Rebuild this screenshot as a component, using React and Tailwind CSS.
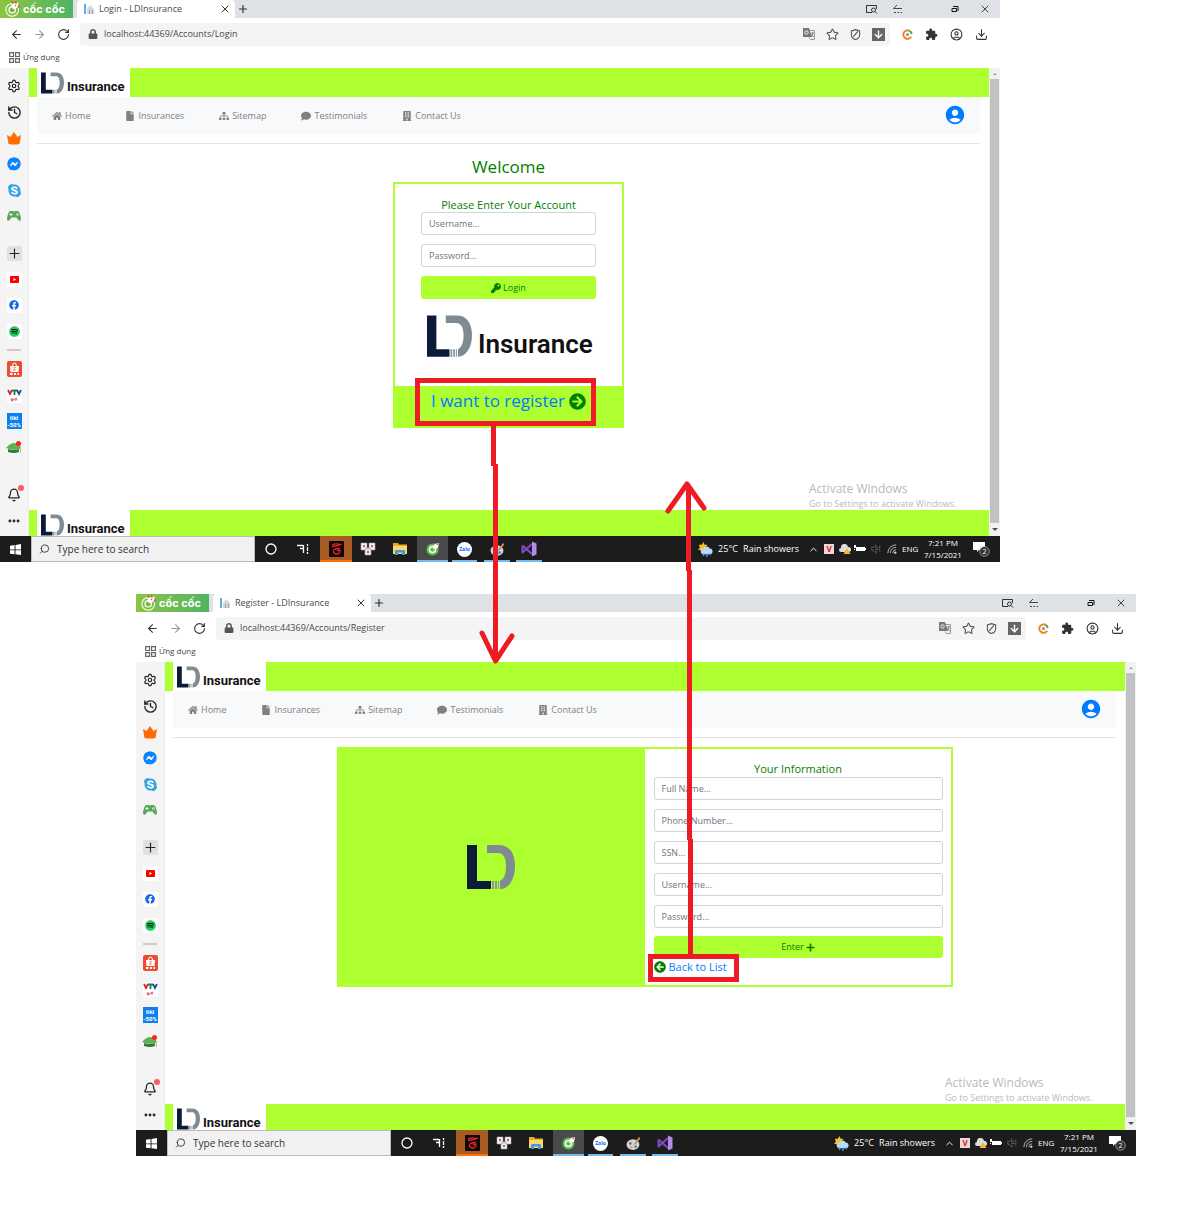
import React from "react";
import {
  FaHome, FaFile, FaSitemap, FaComment, FaBuilding, FaKey,
  FaArrowCircleRight, FaArrowCircleLeft, FaPlus, FaSpotify, FaFacebook,
  FaFacebookMessenger, FaSkype, FaLock,
} from "react-icons/fa";
import { MdAccountCircle, MdExtension } from "react-icons/md";
import {
  ArrowLeft, ArrowRight, RotateCw, Plus, X, Star, ArrowDown, CircleUser, Download,
  Settings, History, Bell, Search, ChevronUp, Ellipsis, Circle,
} from "lucide-react";

function LogoMark({ className }) {
  return (
    <svg viewBox="0 0 48 44" className={className} aria-hidden="true">
      <path d="M0 0h10v36h14v8H0z" fill="#0a1a38" />
      <path d="M20 0h12c10 0 16 8 16 21s-6 23-15 23V36c4-2 6-7 6-15 0-9-3-13-8-13H20z" fill="#7f8b92" />
      <path d="M25 36h2v8h-2zM28 36h2v8h-2zM31 36h1v8h-1z" fill="#8d989e" />
    </svg>
  );
}

function SmallLogo() {
  return (
    <div className="ml-2 flex h-[29px] w-[93px] items-start bg-white pl-1 pt-[4px]">
      <LogoMark className="h-[22px] w-[23px] shrink-0" />
      <span className="ml-[3px] mt-[6px] font-['Roboto',sans-serif] text-[13px] font-bold leading-[18px] text-[#111]">
        Insurance
      </span>
    </div>
  );
}

function CocCocMark({ className }) {
  return (
    <svg viewBox="0 0 20 20" className={className} aria-hidden="true">
      <circle cx="9" cy="11" r="8" fill="none" stroke="white" strokeWidth="1.300" />
      <circle cx="9" cy="11" r="4" fill="none" stroke="white" strokeWidth="1.500" />
      <path d="M9 11l-1-8 9-1-1 6z" fill="white" />
      <path d="M8 3l1.500-3L11 3zM12 3l1.500-3L15 3zM12 6l2-2v3zM15 8l3-3v3z" fill="#e53935" />
      <circle cx="9" cy="11" r="1.500" fill="#4caf50" />
    </svg>
  );
}

function TabStrip({ title }) {
  return (
    <div className="flex h-[18px] items-stretch bg-[#dee1e6]">
      <button className="flex w-[73px] items-center bg-linear-to-r from-[#8bc53f] to-[#4db463] pl-[5px] text-white">
        <CocCocMark className="size-4" />
        <span className="ml-[2px] font-['Inter',sans-serif] text-[11px] font-bold leading-[18px]">cốc cốc</span>
      </button>
      <div className="ml-1 flex w-[158px] items-center rounded-t bg-white pl-[6px] pr-1">
        <svg viewBox="0 0 12 12" className="size-3" aria-hidden="true">
          <path d="M1 1h2v10H1z" fill="#6aa9dd" />
          <path d="M4 6l3-4 4 4v5H4z" fill="#d3d9de" />
          <path d="M6 7h1v4H6zM9 7h1v4H9z" fill="#9aa4ac" />
        </svg>
        <span className="ml-1 flex-1 text-[9px] leading-4 text-[#45494e]">{title}</span>
        <button aria-label="Close tab"><X className="size-3" strokeWidth={2} color="#333" /></button>
      </div>
      <button aria-label="New tab" className="ml-[2px]"><Plus className="size-3" strokeWidth={2.4} color="#333" /></button>
      <div className="ml-auto flex items-center pr-[9px] text-[#333]">
        <button aria-label="Search tabs" className="mr-[15px]">
          <svg viewBox="0 0 12 10" className="h-[10px] w-3" fill="none" stroke="currentColor">
            <path d="M6 8.500H.5v-7h10V5" /><circle cx="7.500" cy="6" r="2" /><path d="M9 7.500l2 2" />
          </svg>
        </button>
        <button aria-label="Minimize" className="mr-12">
          <svg viewBox="0 0 10 10" className="size-[10px]" fill="none" stroke="currentColor" strokeWidth=".9">
            <path d="M.5 4.500H9M4 1L.5 4.500M1 8.500h2M4.500 8.500h1.500M7.500 8.500H9" />
          </svg>
        </button>
        <button aria-label="Restore" className="mr-[20px]">
          <svg viewBox="0 0 8 8" className="size-2" fill="none" stroke="#111">
            <path d="M2 1.500h5V6M1 3.500h4.500v3H1z" />
          </svg>
        </button>
        <button aria-label="Close window"><X className="size-3" strokeWidth={1.8} /></button>
      </div>
    </div>
  );
}

function Toolbar({ path }) {
  return (
    <div className="flex h-[32px] items-center bg-white text-[#333]">
      <button aria-label="Back" className="ml-[10px]"><ArrowLeft className="size-[13px]" /></button>
      <button aria-label="Forward" className="ml-[10px] text-[#999]"><ArrowRight className="size-[13px]" /></button>
      <button aria-label="Reload" className="ml-[11px]"><RotateCw className="size-[13px]" /></button>
      <div className="ml-[10px] flex h-[23px] flex-1 items-center rounded-sm bg-[#f4f4f4] pl-2 pr-[5px]">
        <FaLock className="size-[10px] text-[#555]" />
        <input
          aria-label="Address"
          defaultValue={"localhost:44369" + path}
          className="ml-[6px] min-w-0 flex-1 bg-transparent text-[9px] leading-4 text-[#4a4a4a] outline-none"
        />
        <div className="flex items-center gap-[11px] text-[#555]">
          <button aria-label="Translate">
            <svg viewBox="0 0 12 12" className="size-3">
              <path d="M0 0h6l3 9H0z" fill="#777" />
              <path d="M7 2.500h4.500v9H7.500L6 9.500" fill="none" stroke="#999" />
              <circle cx="3.500" cy="4.500" r="1.700" fill="none" stroke="#fff" strokeWidth=".9" />
              <path d="M8 5h3M9.500 4v1M8 9l2.500-4M8.500 6l2 3" stroke="#777" strokeWidth=".8" />
            </svg>
          </button>
          <button aria-label="Bookmark"><Star className="size-[13px]" strokeWidth={2} /></button>
          <button aria-label="Shield">
            <svg viewBox="0 0 12 12" className="size-[11px]" fill="none" stroke="currentColor" strokeWidth="1.200">
              <path d="M6 .7l4.500 1.500v4C10.500 9 8.500 10.700 6 11.500 3.500 10.700 1.500 9 1.500 6.200v-4zM3.500 8.500l5-6" />
            </svg>
          </button>
          <button aria-label="Save" className="bg-[#666] p-[1px] text-white"><ArrowDown className="size-[11px]" strokeWidth={3} /></button>
        </div>
      </div>
      <div className="mx-3 flex items-center gap-3">
        <button aria-label="Savings">
          <svg viewBox="0 0 12 12" className="size-[11px]" fill="none">
            <path d="M10 8.500A4.600 4.600 0 1 1 8 1.900" stroke="#f58220" strokeWidth="2.200" />
            <path d="M8 1.900A4.600 4.600 0 0 1 10.600 5.500" stroke="#4caf50" strokeWidth="2.200" />
            <circle cx="6" cy="6" r="1.700" fill="#8a96a3" />
          </svg>
        </button>
        <button aria-label="Extensions"><MdExtension className="size-[13px]" /></button>
        <button aria-label="Profile"><CircleUser className="size-[13px]" strokeWidth={2} /></button>
        <button aria-label="Downloads"><Download className="size-[13px]" strokeWidth={2} /></button>
      </div>
    </div>
  );
}

function Bookmarks() {
  return (
    <div className="flex h-[18px] items-center bg-white pb-1 pl-[9px]">
      <svg viewBox="0 0 11 11" className="size-[11px]" fill="none" stroke="#666" strokeWidth="1.200" aria-hidden="true">
        <path d="M.7.7h3.800v3.800H.7zM6.600.7h3.800v3.800H6.600zM.7 6.600h3.800v3.800H.7zM6.600 6.600h3.800v3.800H6.600z" />
      </svg>
      <a href="#apps" className="ml-[3px] text-[8px] leading-3 text-[#444]">Ứng dụng</a>
    </div>
  );
}

function Side({ label, children }) {
  return (
    <button aria-label={label} className="flex h-[26px] w-full items-center justify-center">
      {children}
    </button>
  );
}

function Tile({ children }) {
  return <span className="flex size-[15px] items-center justify-center rounded-xs bg-white">{children}</span>;
}

function Sidebar() {
  return (
    <aside className="flex w-[29px] shrink-0 flex-col border-r border-[#ebebeb] bg-[#f4f4f4] pb-[2px] pt-[5px] text-[#222]">
      <Side label="Settings"><Settings className="size-[14px]" strokeWidth={2} /></Side>
      <Side label="History"><History className="size-[15px]" strokeWidth={2.200} /></Side>
      <Side label="Points">
        <svg viewBox="0 0 14 13" className="h-[13px] w-[14px]"><path d="M0 3l3.500 2L7 0l3.500 5L14 3l-1.500 9q-5.500 1.200-11 0z" fill="#ff6d00" /></svg>
      </Side>
      <Side label="Messenger"><FaFacebookMessenger className="size-[14px] rounded-full bg-[radial-gradient(#fff_50%,transparent_50%)] text-[#0a84ff]" /></Side>
      <Side label="Skype"><FaSkype className="size-[15px] rounded-full bg-[radial-gradient(#fff_50%,transparent_50%)] text-[#35a5e0]" /></Side>
      <Side label="Games">
        <svg viewBox="0 0 14 10" className="h-[10px] w-[14px]">
          <path d="M3 0h3q1 1 2 0h3q2 1 3 7.500c0 3-2 3-3.500.5L9.500 6.500h-5L3.500 8C2 10.500 0 10.500 0 7.500Q1 1 3 0z" fill="#5aa85c" />
          <path d="M2.500 3.500h3M4 2v3M9 3.500h.9M11 3.500h.9M10 2.500h.9M10 4.500h.9" stroke="#fff" strokeWidth=".9" />
        </svg>
      </Side>
      <div className="mt-[11px]">
        <Side label="Add"><span className="rounded-xs bg-[#e0e0e0]"><Plus className="size-[15px]" strokeWidth={1.800} /></span></Side>
      </div>
      <Side label="YouTube">
        <Tile><svg viewBox="0 0 9 7" className="h-[7px] w-[9px]"><rect width="9" height="7" rx="1" fill="#f00" /><path d="M3.500 2l2.500 1.500L3.500 5z" fill="#fff" /></svg></Tile>
      </Side>
      <Side label="Facebook"><Tile><FaFacebook className="size-[10px] text-[#1868e5]" /></Tile></Side>
      <Side label="Spotify"><Tile><FaSpotify className="size-[11px] bg-[radial-gradient(#111_50%,transparent_50%)] text-[#1ed05c]" /></Tile></Side>
      <hr className="mx-[7px] my-[5px] border-t-2 border-[#ccc]" />
      <Side label="Shopee">
        <svg viewBox="0 0 15 16" className="h-4 w-[15px]">
          <rect width="15" height="16" rx="2" fill="#ee4d2d" />
          <path d="M3 5h9l-.5 6h-8z" fill="#fff" /><path d="M5.500 5a2 3 0 0 1 4 0" fill="none" stroke="#fff" />
          <path d="M8.700 6.500c-2-.8-2.500.8-1.200 1.300s1.300 2-1.300 1.200" fill="none" stroke="#ee4d2d" strokeWidth=".8" />
          <path d="M3 13h2.500M7 13h2M10.500 13H12" stroke="#fff" strokeWidth="2" />
        </svg>
      </Side>
      <Side label="VTV">
        <svg viewBox="0 0 15 15" className="size-[15px]">
          <rect width="15" height="15" rx="1" fill="#fff" />
          <path d="M1 2l2 4 2-4" fill="none" stroke="#d6233c" strokeWidth="1.800" />
          <path d="M5 2.500h5M7.500 2.500V7" stroke="#1d7d4c" strokeWidth="1.800" />
          <path d="M10 2l2 4 2-4" fill="none" stroke="#23489c" strokeWidth="1.800" />
          <path d="M4 12c0-2 2-2 2 0s-2 1-1-1M8 11c2-2 3 2 0 1M4 13l6-3" fill="none" stroke="#e4546b" />
        </svg>
      </Side>
      <Side label="Tiki">
        <span className="flex h-4 w-[15px] flex-col items-center justify-center bg-[#0d7ff0] font-['Roboto',sans-serif] text-[6px] font-bold leading-[7px] text-white">
          <span>tiki</span><span>-50%</span>
        </span>
      </Side>
      <Side label="Education">
        <svg viewBox="0 0 16 15" className="h-[15px] w-4">
          <path d="M0 8q3-4 7-5 6 0 8 5l-2 1q-6 2-13-1z" fill="#5cb04f" />
          <path d="M2 9q6 2 11 0v3q-5 2-11 0z" fill="#2c7e39" />
          <circle cx="12.500" cy="3.500" r="2.500" fill="#f22" /><path d="M14.500 7v6" stroke="#d9b95a" />
        </svg>
      </Side>
      <div className="mt-[22px]">
        <button aria-label="Notifications" className="relative flex h-[26px] w-full items-center justify-center">
          <Bell className="size-[14px]" strokeWidth={2.200} />
          <span className="absolute right-1 top-[3px] size-[6px] rounded-full bg-[#ff5a5f]" />
        </button>
        <Side label="More"><Ellipsis className="size-[14px]" strokeWidth={3} /></Side>
      </div>
    </aside>
  );
}

const navItems = [
  ["Home", FaHome],
  ["Insurances", FaFile],
  ["Sitemap", FaSitemap],
  ["Testimonials", FaComment],
  ["Contact Us", FaBuilding],
];

function SiteNav() {
  return (
    <nav className="ml-2 mr-[9px] flex h-[37px] items-center gap-[35px] bg-[#f8f9fa] pl-[15px] pr-[14px]">
      {navItems.map(([name, Icon]) => (
        <a key={name} href={"#" + name} className="flex items-center gap-[3px] text-[9px] leading-4 text-[#808080]">
          <Icon className="h-[10px] w-auto" />
          {name}
        </a>
      ))}
      <a href="#account" aria-label="Account" className="mb-[2px] ml-auto"><MdAccountCircle className="size-[22px] text-[#007bff]" /></a>
    </nav>
  );
}

function Field({ placeholder, type = "text" }) {
  return (
    <input
      aria-label={placeholder}
      type={type}
      placeholder={placeholder}
      className="h-[23px] w-full rounded-[3px] border border-[#ced4da] bg-white px-[7px] text-[9px] leading-4 placeholder:text-[#6c757d]"
    />
  );
}

function LoginPage() {
  return (
    <div className="ml-2 mr-[9px] flex flex-col items-center">
      <h1 className="mt-[11px] text-[17px] leading-6 text-[#008000]">Welcome</h1>
      <div className="mt-[3px] w-[231px] border-2 border-[#adff2f] bg-white">
        <form className="flex flex-col px-[26px] pt-[13px]">
          <h2 className="text-center text-[11px] leading-[15px] text-[#008000]">Please Enter Your Account</h2>
          <div className="flex flex-col gap-[9px]">
            <Field placeholder="Username..." />
            <Field placeholder="Password..." type="password" />
            <button type="button" className="flex h-[23px] items-center justify-center gap-[2px] rounded-[3px] bg-[#adff2f] text-[9px] text-[#008000]">
              <FaKey className="size-[10px]" /> Login
            </button>
          </div>
          <div className="mb-[29px] mt-4 flex h-[42px] items-start pl-[6px]">
            <LogoMark className="h-[42px] w-[45px] shrink-0" />
            <span className="ml-[6px] mt-[13px] font-['Roboto',sans-serif] text-[26px] font-semibold leading-[32px] text-[#111]">
              Insurance
            </span>
          </div>
        </form>
        <div className="flex h-10 items-center justify-center bg-[#adff2f] pb-[10px]">
          <a href="#register" className="flex items-center gap-1 whitespace-nowrap text-[17px] leading-6 text-[#007bff]">
            I want to register <FaArrowCircleRight className="size-[17px] text-[#008000]" />
          </a>
        </div>
      </div>
    </div>
  );
}

function RegisterPage() {
  return (
    <div className="ml-2 mr-[9px] mt-[9px] flex justify-center">
      <div className="grid w-[616px] grid-cols-2">
        <div className="flex items-center justify-center bg-[#adff2f]">
          <LogoMark className="h-[44px] w-[48px]" />
        </div>
        <form className="flex flex-col border-2 border-l-0 border-[#adff2f] bg-white pb-[10px] pl-[9px] pr-2 pt-3">
          <h2 className="text-center text-[11px] leading-4 text-[#008000]">Your Information</h2>
          <div className="flex flex-col gap-[9px]">
            <Field placeholder="Full Name..." />
            <Field placeholder="Phone Number..." />
            <Field placeholder="SSN..." />
            <Field placeholder="Username..." />
            <Field placeholder="Password..." type="password" />
          </div>
          <button type="button" className="mt-2 flex h-[22px] items-center justify-center gap-[2px] rounded-[3px] bg-[#adff2f] text-[9px] text-[#008000]">
            Enter <FaPlus className="size-[9px]" />
          </button>
          <a href="#list" className="flex items-center gap-[3px] text-[11px] leading-[17px] text-[#007bff]">
            <FaArrowCircleLeft className="size-[12px] text-[#008000]" /> Back to List
          </a>
        </form>
      </div>
    </div>
  );
}

function Scrollbar() {
  return (
    <div className="flex w-[11px] shrink-0 flex-col items-center bg-[#f1f1f1]" aria-hidden="true">
      <div className="flex h-[11px] items-center"><span className="border-x-2 border-b-2 border-x-transparent border-b-[#999]" /></div>
      <div className="w-[9px] flex-1 bg-[#c1c1c1]" />
      <div className="flex h-[13px] items-center"><span className="border-x-3 border-t-3 border-x-transparent border-t-[#505050]" /></div>
    </div>
  );
}

function Task({ label, className = "w-8 border-transparent", children }) {
  return (
    <button aria-label={label} className={"flex items-center justify-center border-y-2 " + className}>
      {children}
    </button>
  );
}

function Taskbar() {
  return (
    <div className="flex h-[26px] items-stretch bg-[#1c1c1c] text-white">
      <button aria-label="Start" className="flex w-[31px] items-center justify-center">
        <svg viewBox="0 0 12 12" className="size-[11px]"><path d="M0 2l5-1v5H0zM6 1l6-1v6H6zM0 6.800h5v4.500l-5-.8zM6 6.800h6V12l-6-.8z" fill="#fff" /></svg>
      </button>
      <div className="flex w-[224px] items-center border border-[#bbb] bg-[#f1f1f1] pl-[7px] text-[#222]">
        <Search className="size-3 -scale-x-100" strokeWidth={1.800} />
        <input aria-label="Search" placeholder="Type here to search" className="ml-[7px] w-full bg-transparent text-[10px] leading-4 outline-none placeholder:text-[#333]" />
      </div>
      <Task label="Cortana"><Circle className="size-[12px]" strokeWidth={2.600} /></Task>
      <Task label="Task view">
        <svg viewBox="0 0 12 12" className="size-[12px]" stroke="#fff" fill="none"><path d="M0 2.500h6M6.500 2v8M3 5.500h3M10.500 1v2M10.500 4v4M10.500 9v2" strokeWidth="1.300" /></svg>
      </Task>
      <Task label="Garena" className="ml-px w-8 border-t-[#a85c24] border-b-[#ff6f00] bg-[#a85c24]">
        <svg viewBox="0 0 15 16" className="h-4 w-[15px]">
          <rect width="15" height="16" rx="1" fill="#120808" />
          <path d="M13 3Q9 5 3 5.500M3 4q4-2 8-.5M11 7.500L6 8q-2 1-1.500 3Q5 13 8 13t3-3.500H8" fill="none" stroke="#e5232b" strokeWidth="1.300" />
        </svg>
      </Task>
      <Task label="Solitaire">
        <svg viewBox="0 0 16 14" className="h-[14px] w-4">
          <path d="M1 1h6v7H1zM9 1h6v7H9zM5 6h6v7H5z" fill="#f3f3f3" stroke="#aaa" strokeWidth=".6" />
          <path d="M3 3h2v2H3zM11 3h2v2h-2zM7 9h2v2H7z" fill="#d4545c" />
        </svg>
      </Task>
      <Task label="Explorer">
        <svg viewBox="0 0 14 12" className="h-3 w-[14px]">
          <path d="M0 0h5l1 1.500h8V11H0z" fill="#e7ab35" /><path d="M0 3h14v8H0z" fill="#ffd766" />
          <path d="M2 12V8q0-1 1-1h8q1 0 1 1v4H9V9.500H5V12z" fill="#3b9be0" />
        </svg>
      </Task>
      <Task label="Cốc Cốc" className="ml-px w-[31px] border-t-[#4a4a4a] border-b-[#76b9ed] bg-[#4a4a4a]">
        <svg viewBox="0 0 14 14" className="size-[14px]">
          <circle cx="6.500" cy="7.500" r="6" fill="#5bbf4e" /><circle cx="6.500" cy="7.500" r="3.800" fill="#fff" />
          <circle cx="6.500" cy="7.500" r="2.300" fill="#5bbf4e" /><path d="M7 7l1-5 5-1-1 5z" fill="#fff" /><path d="M10 2.500l2-1.500v2zM8 2l1-1v2z" fill="#e53935" />
        </svg>
      </Task>
      <Task label="Zalo" className="ml-[4px] w-[25px] border-t-transparent border-b-[#76b9ed]">
        <span className="flex size-[15px] items-center justify-center rounded-full bg-white text-[5px] font-bold leading-3 text-[#0a6cff]">Zalo</span>
      </Task>
      <Task label="Paint" className="ml-[7px] w-[26px] border-t-transparent border-b-[#76b9ed]">
        <svg viewBox="0 0 14 14" className="size-[15px]">
          <ellipse cx="6.500" cy="8" rx="6" ry="5" fill="#c8d7e3" /><circle cx="4" cy="7" r="1.300" fill="#d94f45" />
          <circle cx="5" cy="10.500" r="1.200" fill="#e7ad33" /><circle cx="9" cy="10" r="1.300" fill="#428bd0" />
          <path d="M7 8l5-7 1.500 1L9 8z" fill="#d88b45" />
        </svg>
      </Task>
      <Task label="Visual Studio" className="ml-[6px] w-[26px] border-t-transparent border-b-[#76b9ed]">
        <svg viewBox="0 0 16 16" className="size-4">
          <path d="M1.500 4.500v7L11 3M1.500 4.500L11 13" fill="none" stroke="#8448c4" strokeWidth="2" strokeLinejoin="round" />
          <path d="M11 .5l4.500 2v11l-4.500 2z" fill="#b58aea" />
        </svg>
      </Task>
      <div className="ml-auto flex items-center pr-[9px] text-[9px] leading-3">
        <svg viewBox="0 0 16 16" className="size-[15px]" aria-hidden="true">
          <path d="M6 0l1 3 3 0-2 3 1 3H3L0 8l2-2-1-3h3z" fill="#f9c02d" />
          <path d="M6 13a3 3 0 0 1 0-6 3.500 3.500 0 0 1 6.500 0 3 3 0 0 1 0 6z" fill="#b8dcf5" />
          <path d="M6 12v3M9.500 13v3M13 12v2" stroke="#4fa3e3" strokeWidth="1.500" />
        </svg>
        <span className="ml-[5px] w-[25px] whitespace-nowrap">25°C</span>
        <span className="whitespace-nowrap">Rain showers</span>
        <ChevronUp className="ml-[9px] size-[11px]" strokeWidth={2} />
        <span className="ml-[5px] flex size-[10px] items-center justify-center bg-[#f5d6d6] text-[8px] font-bold leading-[10px] text-[#c62828]">V</span>
        <svg viewBox="0 0 12 10" className="ml-[5px] h-[10px] w-3" aria-hidden="true">
          <path d="M2 8a2 2 0 0 1 0-4 3.500 3.500 0 0 1 7-1 2.500 2.500 0 0 1 1 5z" fill="#ddd" /><path d="M8 4l3.500 6h-7z" fill="#f6b62c" />
        </svg>
        <svg viewBox="0 0 12 8" className="ml-[3px] h-2 w-3" aria-hidden="true"><path d="M0 0h2v3H0zM0 4h1v1H0zM2 2h9v1h1v2h-1v1H2z" fill="#fff" /></svg>
        <svg viewBox="0 0 12 12" className="ml-[5px] size-[10px]" fill="none" stroke="#aaa" strokeDasharray="1 1" aria-hidden="true"><path d="M1 4v4h2l3 3V1L3 4zM8 4v4M10.500 2v8" /></svg>
        <svg viewBox="0 0 12 12" className="ml-[6px] size-[10px]" fill="none" stroke="#ccc" aria-hidden="true"><path d="M1 11A10 10 0 0 1 11 1M4 11a7 7 0 0 1 7-7M7 11a4 4 0 0 1 4-4" /><circle cx="10" cy="10.500" r="1" fill="#fff" /></svg>
        <span className="ml-[5px] w-4 text-[8px]">ENG</span>
        <span className="ml-[6px] w-[38px] whitespace-nowrap text-center text-[8px] leading-3">7:21 PM<br />7/15/2021</span>
        <button aria-label="Notifications" className="ml-[11px]">
          <svg viewBox="0 0 18 16" className="h-4 w-[18px]">
            <path d="M0 1h12v8H6l-2 2V9H0z" fill="#fff" /><circle cx="11.500" cy="10.500" r="4.800" fill="#333" stroke="#aaa" strokeWidth=".8" />
            <text x="11.500" y="13" fontSize="7" textAnchor="middle" fill="#fff">2</text>
          </svg>
        </button>
      </div>
    </div>
  );
}

function BrowserWindow({ title, path, children }) {
  return (
    <section aria-label={title}>
      <TabStrip title={title} />
      <Toolbar path={path} />
      <Bookmarks />
      <div className="flex">
        <Sidebar />
        <div className="flex min-w-0 flex-1 flex-col bg-white">
          <header className="bg-[#adff2f]"><SmallLogo /></header>
          <SiteNav />
          <hr className="ml-2 mr-[9px] mt-[9px] border-[#e3e3e3]" />
          {children}
          <div className="mt-auto flex justify-end pr-[32px] text-[#b9b9b9]">
            <p className="w-[148px] whitespace-nowrap text-[12px] leading-4">
              Activate Windows
              <span className="block text-[9px] leading-[13px]">Go to Settings to activate Windows.</span>
            </p>
          </div>
          <footer className="h-[26px] overflow-hidden bg-[#adff2f]"><SmallLogo /></footer>
        </div>
        <Scrollbar />
      </div>
      <Taskbar />
    </section>
  );
}

function FlowArrows() {
  return (
    <svg className="pointer-events-none absolute left-0 top-0 h-[1228px] w-[1198px]" viewBox="0 0 1198 1228" fill="none" stroke="#ed1c24" strokeWidth="5" aria-hidden="true">
      <path d="M417.500 380.500h176v43h-176z" />
      <path d="M493.500 426v40M495.500 464v196" />
      <path d="M482 633l13.500 28L512 636" strokeLinecap="round" strokeLinejoin="round" />
      <path d="M650.500 956.500h86v23h-86z" />
      <path d="M690.500 955V839M689.500 840V570M688.500 571V487" />
      <path d="M668 511l19-27 17 24" strokeLinecap="round" strokeLinejoin="round" />
    </svg>
  );
}

export default function App() {
  return (
    <main className="relative min-h-screen bg-white pb-[72px] font-['Open_Sans','Noto_Sans',sans-serif]">
      <div className="mr-[198px]">
        <BrowserWindow title="Login - LDInsurance" path="/Accounts/Login"><LoginPage /></BrowserWindow>
      </div>
      <div className="ml-[136px] mr-[62px] mt-8">
        <BrowserWindow title="Register - LDInsurance" path="/Accounts/Register"><RegisterPage /></BrowserWindow>
      </div>
      <FlowArrows />
    </main>
  );
}
